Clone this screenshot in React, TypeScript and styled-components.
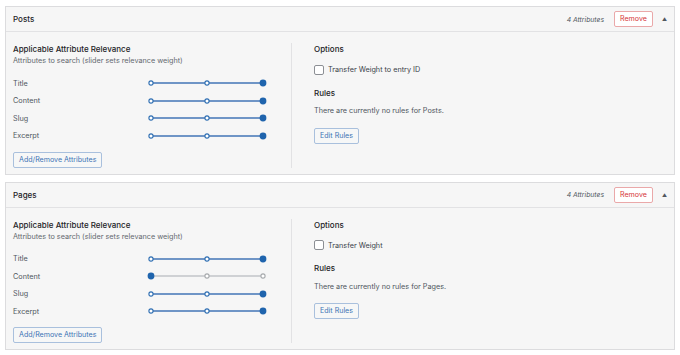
import * as React from 'react';
import styled, { createGlobalStyle } from 'styled-components';

const GlobalStyle = createGlobalStyle`
  html, body {
    margin: 0;
    padding: 0;
    background: #fff;
  }
  body {
    font-family: Inter, "Noto Sans", "Liberation Sans", sans-serif;
    color: #1d2327;
    -webkit-font-smoothing: antialiased;
  }
`;

type Weight = 0 | 1 | 2;

type Source = {
  name: string;
  option: string;
  weights: { label: string; value: Weight; enabled: boolean }[];
};

const sources: Source[] = [
  {
    name: 'Posts',
    option: 'Transfer Weight to entry ID',
    weights: [
      { label: 'Title', value: 2, enabled: true },
      { label: 'Content', value: 2, enabled: true },
      { label: 'Slug', value: 2, enabled: true },
      { label: 'Excerpt', value: 2, enabled: true },
    ],
  },
  {
    name: 'Pages',
    option: 'Transfer Weight',
    weights: [
      { label: 'Title', value: 2, enabled: true },
      { label: 'Content', value: 0, enabled: false },
      { label: 'Slug', value: 2, enabled: true },
      { label: 'Excerpt', value: 2, enabled: true },
    ],
  },
];

const STOPS = [4, 60, 116];

const Slider = ({ value, enabled }: { value: Weight; enabled: boolean }) => {
  const track = enabled ? '#6f95c6' : '#cfd1d4';
  const handle = '#1f64ad';
  const stopColor = enabled ? '#2f6fb3' : '#a7aaad';
  return (
    <SliderSvg width="120" height="10" viewBox="0 0 120 10">
      <line x1={STOPS[0]} y1="5" x2={STOPS[2]} y2="5" stroke={track} strokeWidth="1.8" />
      {STOPS.map((x, i) =>
        i === value ? (
          <circle key={i} cx={x} cy="5" r="3.4" fill={handle} />
        ) : (
          <circle key={i} cx={x} cy="5" r="2.1" fill="#fff" stroke={stopColor} strokeWidth="1.1" />
        )
      )}
    </SliderSvg>
  );
};

const SourcePanel = ({ source }: { source: Source }) => (
  <Panel>
    <PanelHeader>
      <PanelTitle>{source.name}</PanelTitle>
      <HeaderMeta>
        <AttrCount>{source.weights.length} Attributes</AttrCount>
        <Button $tone="danger">Remove</Button>
        <Toggle>▲</Toggle>
      </HeaderMeta>
    </PanelHeader>
    <PanelBody>
      <LeftColumn>
        <Heading>Applicable Attribute Relevance</Heading>
        <Hint>Attributes to search (slider sets relevance weight)</Hint>
        <WeightList>
          {source.weights.map(w => (
            <WeightRow key={w.label}>
              <WeightLabel>{w.label}</WeightLabel>
              <Slider value={w.value} enabled={w.enabled} />
            </WeightRow>
          ))}
        </WeightList>
        <Button>Add/Remove Attributes</Button>
      </LeftColumn>
      <RightColumn>
        <Heading>Options</Heading>
        <CheckRow>
          <Checkbox />
          <span>{source.option}</span>
        </CheckRow>
        <Heading>Rules</Heading>
        <Note>There are currently no rules for {source.name}.</Note>
        <Button>Edit Rules</Button>
      </RightColumn>
    </PanelBody>
  </Panel>
);

export default function App() {
  return (
    <>
      <GlobalStyle />
      <Page>
        {sources.map(s => (
          <SourcePanel key={s.name} source={s} />
        ))}
      </Page>
    </>
  );
}

const Page = styled.div`
  display: flex;
  flex-direction: column;
  gap: 7px;
  padding: 6px 5px;
`;

const Panel = styled.section`
  background: #f6f6f6;
  border: 1px solid #dcdcde;
`;

const PanelHeader = styled.header`
  display: flex;
  align-items: center;
  justify-content: space-between;
  height: 24px;
  padding: 0 7px 0 7px;
  border-bottom: 1px solid #e2e2e4;
`;

const PanelTitle = styled.div`
  font-size: 8px;
  font-weight: 500;
  color: #1d2327;
`;

const HeaderMeta = styled.div`
  display: flex;
  align-items: center;
`;

const AttrCount = styled.span`
  font-size: 6.8px;
  font-style: italic;
  color: #50575e;
  margin-right: 10px;
`;

const Toggle = styled.span`
  font-size: 5px;
  color: #50575e;
  margin-left: 9px;
`;

const Button = styled.button<{ $tone?: 'danger' }>`
  font-family: inherit;
  font-size: 7.1px;
  line-height: 1;
  height: 16px;
  padding: 0 5px;
  border-radius: 2px;
  cursor: pointer;
  align-self: flex-start;
  border: 1px solid ${p => (p.$tone === 'danger' ? '#eaa8a9' : '#a9c0dd')};
  color: ${p => (p.$tone === 'danger' ? '#d63638' : '#3d74b5')};
  background: ${p => (p.$tone === 'danger' ? '#fff' : '#f6f7f7')};
`;

const PanelBody = styled.div`
  display: grid;
  grid-template-columns: 279px 1fr;
  padding: 11px 8px 6px 7px;
`;

const LeftColumn = styled.div`
  display: flex;
  flex-direction: column;
  border-right: 1px solid #e2e2e4;
  padding-right: 12px;
`;

const RightColumn = styled.div`
  display: flex;
  flex-direction: column;
  padding-left: 22px;
`;

const Heading = styled.div`
  font-size: 8px;
  font-weight: 500;
  line-height: 12px;
  color: #1d2327;
`;

const Hint = styled.div`
  font-size: 7.25px;
  line-height: 12px;
  color: #646970;
`;

const WeightList = styled.div`
  display: flex;
  flex-direction: column;
  gap: 7.5px;
  margin: 11px 0 11px;
`;

const WeightRow = styled.div`
  display: flex;
  align-items: center;
  height: 10px;
`;

const WeightLabel = styled.span`
  width: 134px;
  font-size: 7.25px;
  color: #50575e;
`;

const SliderSvg = styled.svg`
  display: block;
`;

const CheckRow = styled.label`
  display: flex;
  align-items: center;
  gap: 4px;
  height: 11px;
  font-size: 7.25px;
  color: #3c434a;
  margin: 9px 0 11.5px;
`;

const Checkbox = styled.span`
  width: 8px;
  height: 8px;
  border: 1px solid #8c8f94;
  border-radius: 2px;
  background: #fff;
`;

const Note = styled.div`
  font-size: 7.25px;
  line-height: 11px;
  color: #50575e;
  margin: 6.5px 0 11.5px;
`;
